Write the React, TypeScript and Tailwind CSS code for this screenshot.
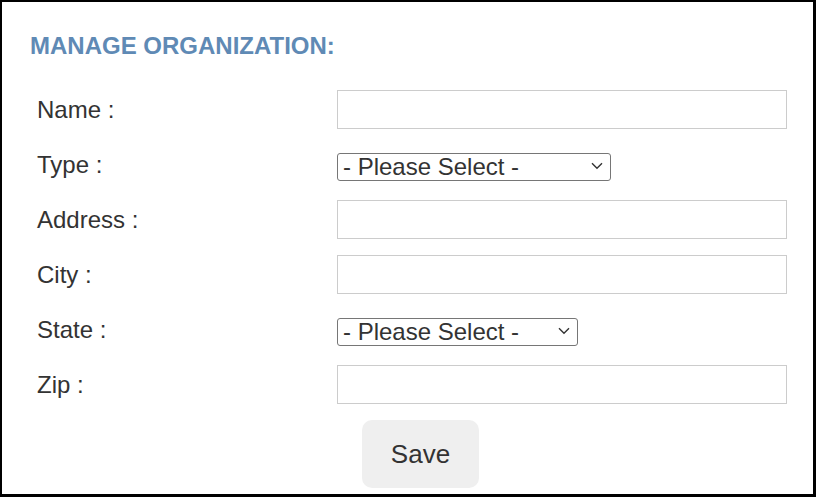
import React from 'react';

const labelCls = "w-[300px] shrink-0 text-[24px] leading-none text-[#333]";

const TextRow = ({ label }: { label: string }) => (
  <div className="flex h-[55px] items-center">
    <label className={labelCls}>{label}</label>
    <input type="text" className="h-[39px] w-[450px] border border-[#cccccc] bg-white" />
  </div>
);

const SelectRow = ({ label, width }: { label: string; width: string }) => (
  <div className="flex h-[55px] items-center">
    <label className={labelCls}>{label}</label>
    <div className={`relative mt-[5px] ${width}`}>
      <select className="h-[28px] w-full appearance-none rounded-[3px] border border-[#767676] bg-white pl-[5px] text-[24px] leading-none text-[#333]">
        <option>- Please Select -</option>
      </select>
      {/* chevron */}
      <svg
        className="pointer-events-none absolute right-[8px] top-[9px]"
        width="12"
        height="8"
        viewBox="0 0 12 8"
        fill="none"
      >
        <path d="M1 1.2 L6 6.2 L11 1.2" stroke="#333" strokeWidth="1.4" />
      </svg>
    </div>
  </div>
);

export default function App() {
  return (
    <div
      className="h-[497px] w-[816px] border-t-2 border-l-2 border-r-[3px] border-b-[3px] border-black bg-white"
      style={{ fontFamily: '"Liberation Sans", Arial, sans-serif' }}
    >
      <h3 className="pl-[28px] pt-[30px] text-[24px] font-bold leading-[28px] text-[#5f8ab5]">
        MANAGE ORGANIZATION:
      </h3>

      <form className="mt-[22px] pl-[35px]" onSubmit={(e) => e.preventDefault()}>
        <TextRow label="Name :" />
        <SelectRow label="Type :" width="w-[274px]" />
        <TextRow label="Address :" />
        <TextRow label="City :" />
        <SelectRow label="State :" width="w-[241px]" />
        <TextRow label="Zip :" />

        <div className="mt-[8px] pl-[325px]">
          <button
            type="submit"
            className="h-[68px] w-[117px] rounded-[10px] bg-[#efefef] text-[26px] text-[#333]"
          >
            Save
          </button>
        </div>
      </form>
    </div>
  );
}
